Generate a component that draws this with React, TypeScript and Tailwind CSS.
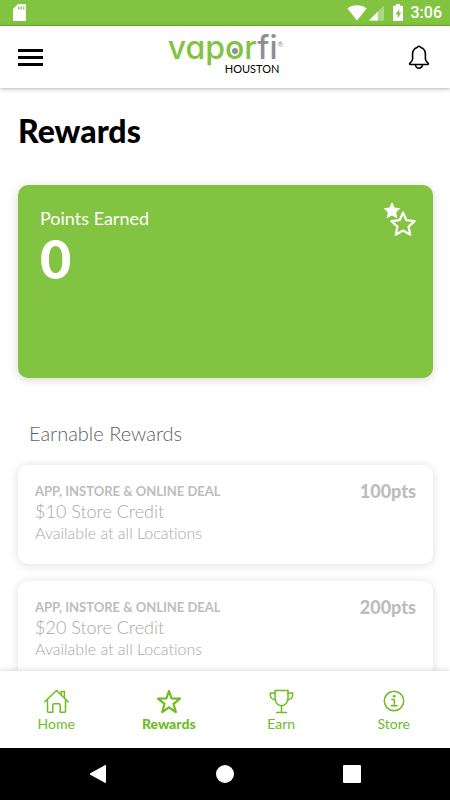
import type { ReactNode } from 'react';
import { clsx } from 'clsx';

interface Reward {
  id: number;
  label: string;
  title: string;
  availability: string;
  points: number;
}

const rewards: Reward[] = [
  {
    id: 1,
    label: 'APP, INSTORE & ONLINE DEAL',
    title: '$10 Store Credit',
    availability: 'Available at all Locations',
    points: 100,
  },
  {
    id: 2,
    label: 'APP, INSTORE & ONLINE DEAL',
    title: '$20 Store Credit',
    availability: 'Available at all Locations',
    points: 200,
  },
];

const StatusBar = () => (
  <div className="flex h-[26px] shrink-0 items-center justify-between border-b border-[#6cb919] bg-[#82c341] pl-[13px] pr-2 text-white">
    <svg width="13" height="17" viewBox="0 0 13 17" aria-hidden="true">
      <path d="M5 0h7a1 1 0 0 1 1 1v15a1 1 0 0 1-1 1H1a1 1 0 0 1-1-1V5z" fill="#fff" />
      <path d="M5.8 2.6v3M8.3 2.6v3M10.8 2.6v3" stroke="#82c341" strokeWidth="1.3" />
    </svg>
    <div className="flex items-center">
      <svg width="58" height="18" viewBox="0 0 58 18" fill="#fff" aria-hidden="true">
        <path d="M0.5 4.5C3 2.5 6.300 1.300 10 1.300s7 1.200 9.500 3.200L10 16.500z" />
        <path d="M37 1.500V16.500H22z" opacity="0.35" />
        <path d="M31 7.500V16.500H22z" />
        <path
          fillRule="evenodd"
          d="M49 0h4v1.800h2a1 1 0 0 1 1 1V16a1 1 0 0 1-1 1h-8a1 1 0 0 1-1-1V2.800a1 1 0 0 1 1-1h2zM52.500 4.500l-4 6h2.200V14.500l3.500-6h-2.200z"
        />
      </svg>
      <span className="ml-1.5 font-[Roboto] text-base leading-5 font-medium">3:06</span>
    </div>
  </div>
);

const Logo = () => (
  <div className="flex flex-col pb-2">
    <div className="flex items-start">
      <p className="font-[Inter] text-[32px] leading-8 font-medium text-[#82c341] [font-feature-settings:'cv11']">
        vap
        <span className="relative">
          o
          <span className="absolute inset-x-0 bottom-[13px] mx-auto size-[6px] rounded-full bg-[#8e8f93]" />
        </span>
        r<span className="text-[#8e8f93]">fi</span>
      </p>
      <span className="mt-1.5 text-[7px] leading-3 text-[#8e8f93]">®</span>
    </div>
    <p className="mr-1 text-right text-[11px] leading-[10px] text-black">HOUSTON</p>
  </div>
);

const Header = () => (
  <header className="relative z-10 flex h-[62px] shrink-0 items-center justify-between bg-white pl-[18px] pr-5 shadow-[0_1px_4px_rgba(0,0,0,0.3)]">
    <button type="button" aria-label="Menu" className="flex w-[25px] flex-col gap-1">
      <span className="h-[3px] bg-black" />
      <span className="h-[3px] bg-black" />
      <span className="h-[3px] bg-black" />
    </button>
    <Logo />
    <button type="button" aria-label="Notifications">
      <svg width="22" height="26" viewBox="0 0 22 26" fill="none" stroke="#000" strokeWidth="1.600" strokeLinejoin="round">
        <path d="M9.200 3.500a1.900 1.900 0 0 1 3.600 0c3.100.9 4.600 3.500 4.600 6.800v4.500c0 2 .9 3.100 2.600 4.200.9.800.5 1.500-.5 1.500h-17c-1 0-1.400-.7-.5-1.500 1.700-1.100 2.600-2.200 2.600-4.200v-4.500c0-3.300 1.500-5.900 4.600-6.800z" />
        <path d="M7.500 20.500a3.500 3.700 0 0 0 7 0" />
      </svg>
    </button>
  </header>
);

const PointsCard = ({ points }: { points: number }) => (
  <section className="mt-9 flex min-h-[193px] items-start justify-between rounded-[10px] bg-[#82c341] pt-[21px] pr-4 pl-[22px] text-white shadow-[0_2px_10px_rgba(0,0,0,0.16)]">
    <div>
      <p className="text-lg leading-6">Points Earned</p>
      <p className="text-[54px] leading-[58px] font-black">{points}</p>
    </div>
    <svg className="-mt-1" width="34" height="36" viewBox="0 0 34 36" aria-hidden="true">
      <path d="M9 0l2.600 5.400 5.900.8-4.300 4.100 1.100 5.900L9 13.400l-5.300 2.800 1.100-5.900L.5 6.200l5.900-.8z" fill="#fff" />
      <path
        d="M20 10.600l3.400 7.600 8.200.9-6.100 5.500 1.800 8.100-7.300-4.200-7.300 4.200 1.800-8.100-6.100-5.500 8.200-.9z"
        fill="#82c341"
        stroke="#fff"
        strokeWidth="2.200"
        strokeLinejoin="round"
      />
    </svg>
  </section>
);

const RewardCard = ({ reward }: { reward: Reward }) => (
  <li className="flex items-start justify-between rounded-[10px] bg-white px-[17px] pt-4 pb-[19px] text-[#bdbdbd] shadow-[0_1px_10px_rgba(0,0,0,0.14)]">
    <div>
      <p className="text-[13px] leading-5 font-bold">{reward.label}</p>
      <h3 className="text-lg leading-5 font-light text-[#a8a8a8]">{reward.title}</h3>
      <p className="text-base leading-6 font-light text-[#a8a8a8]">{reward.availability}</p>
    </div>
    <p className="text-lg leading-5 font-black">{reward.points}pts</p>
  </li>
);

const HomeIcon = () => (
  <>
    <path d="M.8 12.800L12.500 1.500l11.700 11.300M3.500 10.500v11.700a1 1 0 0 0 1 1h4.300v-7a1.500 1.500 0 0 1 1.500-1.500h4.400a1.500 1.500 0 0 1 1.500 1.500v7h4.300a1 1 0 0 0 1-1V10.500" />
    <path d="M17.200 5.500V2.500h3.200v6.300" />
  </>
);

const StarIcon = () => (
  <path
    strokeWidth="2.200"
    d="M13 2l2.600 7.300 8.400.3-6.500 5.200 2.300 8.200-6.800-4.700-6.800 4.700 2.300-8.200L2 9.600l8.400-.3z"
  />
);

const TrophyIcon = () => (
  <>
    <path d="M6 1.500h13v7.500c0 4.500-2.800 7.800-6.500 7.800S6 13.500 6 9z" />
    <path d="M6 4H1.300v1.500c0 3.200 1.900 5.300 5.300 5.300M19 4h4.700v1.500c0 3.200-1.900 5.300-5.300 5.300M12.500 17v6.500M7.500 23.500h10" />
  </>
);

const InfoIcon = () => (
  <>
    <circle cx="13" cy="12" r="9.700" />
    <path d="M10.800 10.400h2.500v6.200M10.300 16.700h5.800" />
    <circle cx="13.100" cy="7.200" r="1" fill="currentColor" strokeWidth="1" />
  </>
);

const NavItem = ({ label, active, children }: { label: string; active?: boolean; children: ReactNode }) => (
  <a
    href="#"
    aria-current={active ? 'page' : undefined}
    className={clsx('flex flex-col items-center pt-[18px]', active && 'font-black')}
  >
    <svg
      width="25"
      height="25"
      viewBox="0 0 25 25"
      fill="none"
      stroke="currentColor"
      strokeWidth="1.500"
      strokeLinejoin="round"
      strokeLinecap="round"
      aria-hidden="true"
    >
      {children}
    </svg>
    <span className="text-sm leading-5">{label}</span>
  </a>
);

const BottomNav = () => (
  <nav className="relative z-10 grid h-[77px] shrink-0 grid-cols-4 bg-white text-[#6cbd1f] shadow-[0_-1px_5px_rgba(0,0,0,0.14)]">
    <NavItem label="Home">
      <HomeIcon />
    </NavItem>
    <NavItem label="Rewards" active>
      <StarIcon />
    </NavItem>
    <NavItem label="Earn">
      <TrophyIcon />
    </NavItem>
    <NavItem label="Store">
      <InfoIcon />
    </NavItem>
  </nav>
);

const SystemBar = () => (
  <div className="flex h-[52px] shrink-0 items-center justify-center gap-[109px] bg-black">
    <button type="button" aria-label="Back">
      <svg width="18" height="18" viewBox="0 0 18 18" fill="#fff">
        <path d="M17 .8v16.400a.8.800 0 0 1-1.200.6L1.300 9.700a.8.800 0 0 1 0-1.400L15.800.200A.8.800 0 0 1 17 .8z" />
      </svg>
    </button>
    <button type="button" aria-label="Home screen" className="size-[18px] rounded-full bg-white" />
    <button type="button" aria-label="Recent apps" className="size-[18px] rounded-[1px] bg-white" />
  </div>
);

const App = () => {
  return (
    <div className="flex h-screen flex-col overflow-hidden bg-white font-[Lato,sans-serif] [font-variant-ligatures:none]">
      <StatusBar />
      <Header />
      <main className="min-h-0 flex-1 overflow-hidden pt-[25px] pr-[17px] pl-[18px]">
        <h1 className="text-[32px] leading-9 font-black text-black">Rewards</h1>
        <PointsCard points={0} />
        <h2 className="mt-[41px] ml-[11px] text-xl leading-7 font-light text-[#606060]">Earnable Rewards</h2>
        <ul className="mt-[18px] flex flex-col gap-[17px]">
          {rewards.map((reward) => (
            <RewardCard key={reward.id} reward={reward} />
          ))}
        </ul>
      </main>
      <BottomNav />
      <SystemBar />
    </div>
  );
};

export default App;
